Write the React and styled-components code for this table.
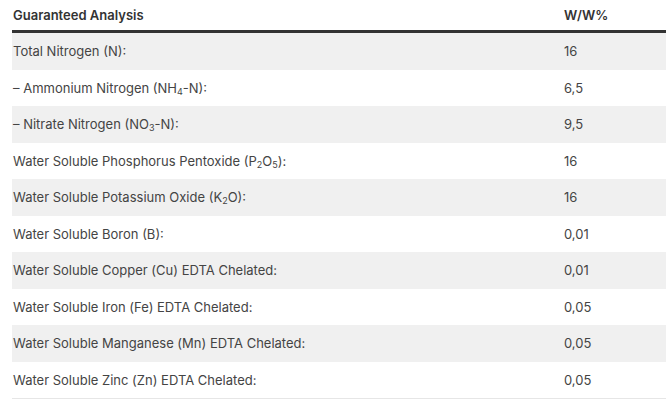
import React from "react"
import styled, { createGlobalStyle } from "styled-components"

const Global = createGlobalStyle`
  body {
    margin: 0;
    background: #fff;
    font-family: Inter, "Noto Sans", sans-serif;
  }
`

const Wrap = styled.section`
  padding: 0 4px 0 12px;
`

const Table = styled.table`
  width: 654px;
  border-collapse: collapse;
  font-size: 13px;
  color: #444;
  border-bottom: 1px solid #e6e6e6;
`

const Head = styled.th`
  text-align: left;
  font-weight: 600;
  color: #333;
  height: 30px;
  padding: 0 0 0 1px;
  border-bottom: 3px solid #333;
  vertical-align: middle;
  width: ${(p) => p.$w || "auto"};
`

const Row = styled.tr`
  background: ${(p) => (p.$shade ? "#f0f0f0" : "#fff")};
`

const Cell = styled.td`
  height: 36.5px;
  padding: 0 0 0 1px;
  line-height: 16px;
  vertical-align: middle;
`

const Sub = styled.sub`
  font-size: 9px;
  line-height: 0;
  vertical-align: -2px;
`

const rows = [
  ["Total Nitrogen (N):", "16"],
  [<>– Ammonium Nitrogen (NH<Sub>4</Sub>-N):</>, "6,5"],
  [<>– Nitrate Nitrogen (NO<Sub>3</Sub>-N):</>, "9,5"],
  [<>Water Soluble Phosphorus Pentoxide (P<Sub>2</Sub>O<Sub>5</Sub>):</>, "16"],
  [<>Water Soluble Potassium Oxide (K<Sub>2</Sub>O):</>, "16"],
  ["Water Soluble Boron (B):", "0,01"],
  ["Water Soluble Copper (Cu) EDTA Chelated:", "0,01"],
  ["Water Soluble Iron (Fe) EDTA Chelated:", "0,05"],
  ["Water Soluble Manganese (Mn) EDTA Chelated:", "0,05"],
  ["Water Soluble Zinc (Zn) EDTA Chelated:", "0,05"],
]

const App = () => {
  return (
    <Wrap>
      <Global />
      <Table>
        <thead>
          <tr>
            <Head $w="550px">Guaranteed Analysis</Head>
            <Head>W/W%</Head>
          </tr>
        </thead>
        <tbody>
          {rows.map(([name, value], i) => (
            <Row key={i} $shade={i % 2 === 0}>
              <Cell>{name}</Cell>
              <Cell>{value}</Cell>
            </Row>
          ))}
        </tbody>
      </Table>
    </Wrap>
  )
}

export default App
